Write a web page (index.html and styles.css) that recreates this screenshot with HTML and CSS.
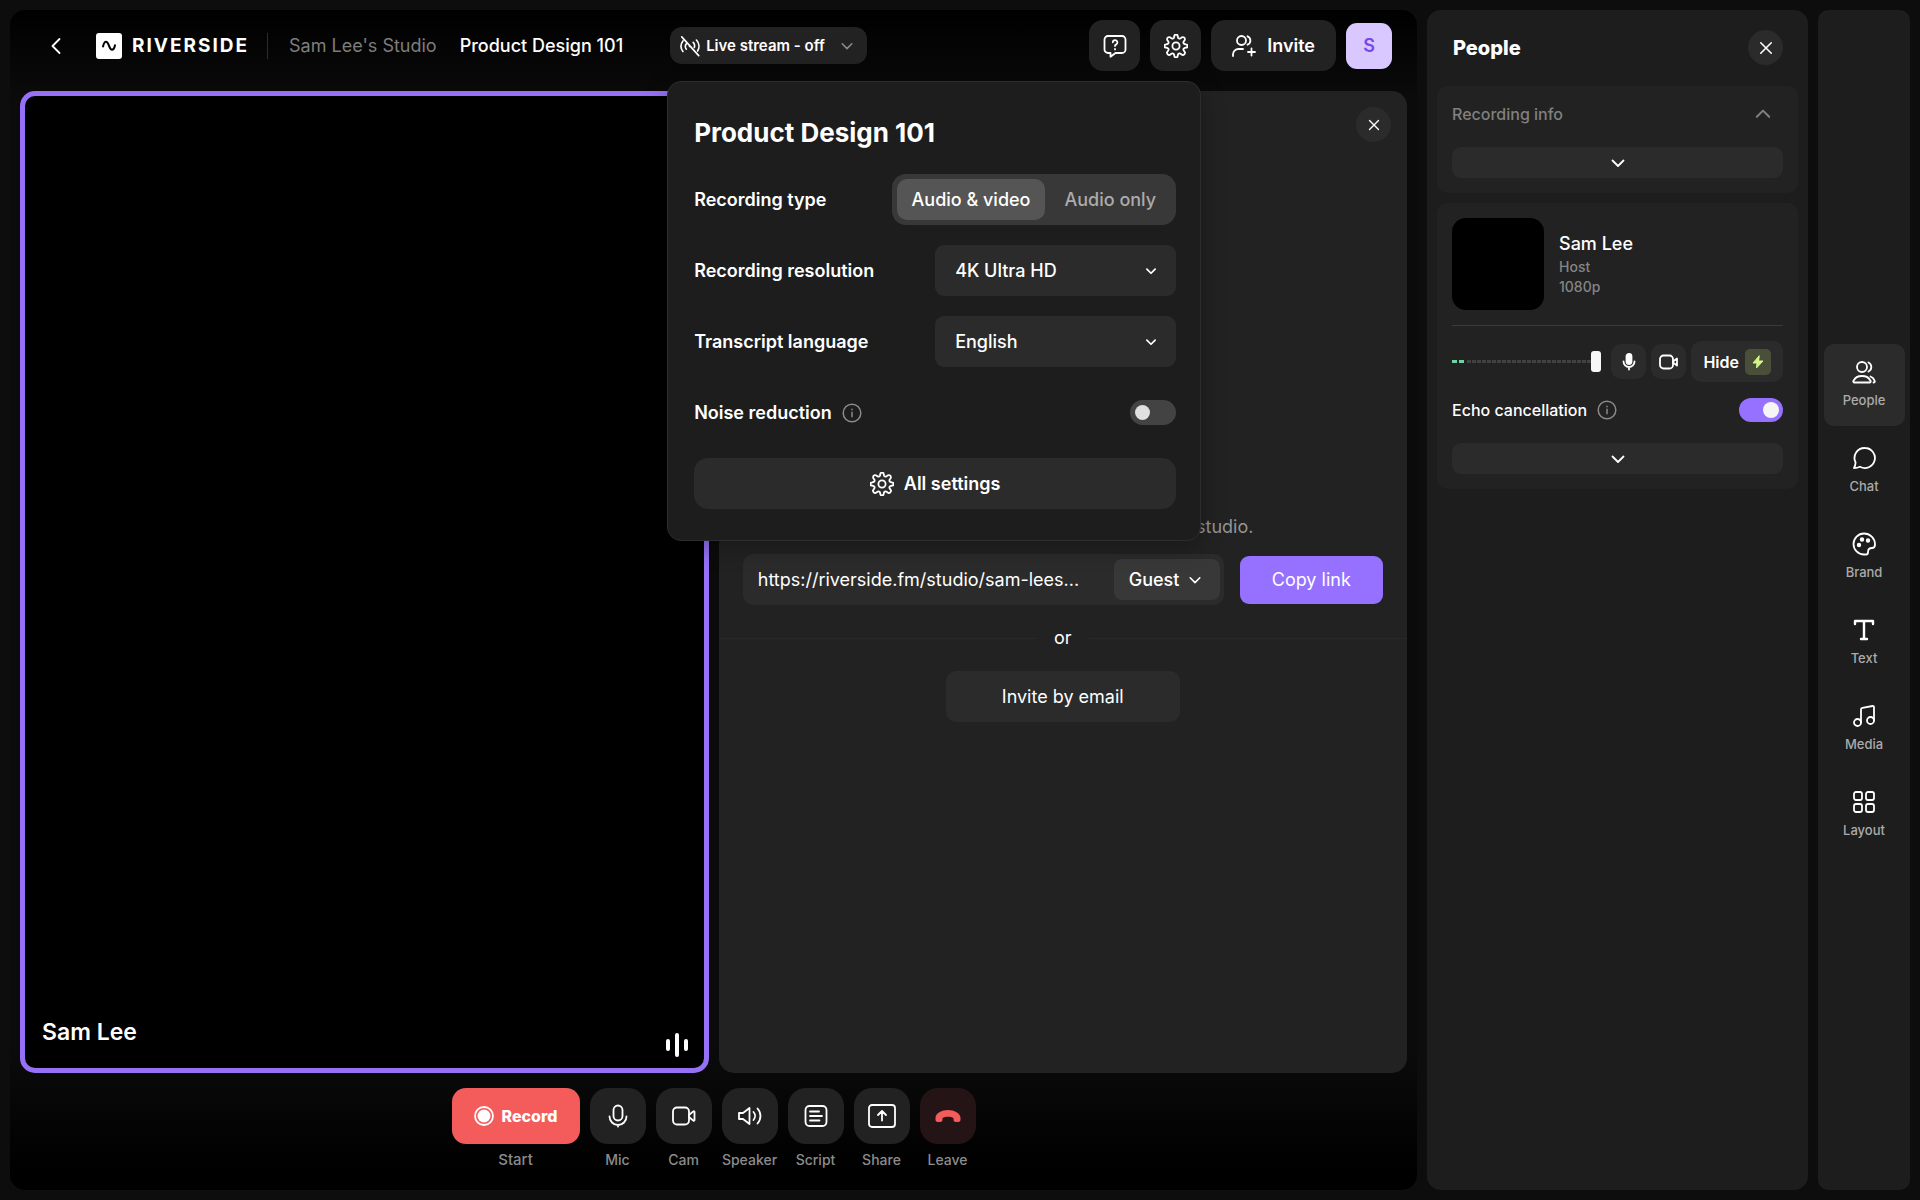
FILE: index.html
```html
<!DOCTYPE html>
<html lang="en">
<head>
  <meta charset="UTF-8">
  <meta name="viewport" content="width=device-width, initial-scale=1.0">
  <title>Product Design 101 - Riverside</title>
  <link rel="stylesheet" href="styles.css">
</head>
<body>

<svg class="sprite" aria-hidden="true">
  <symbol id="chevron" viewBox="0 0 16 16"><path d="M2.500 5.500 8 11l5.500-5.500"/></symbol>
  <symbol id="close" viewBox="0 0 16 16"><path d="M2 2l12 12M14 2 2 14"/></symbol>
  <symbol id="gear" viewBox="0 0 24 24">
    <circle cx="12" cy="12" r="3.600"/>
    <path d="M10.300 2.200a1.700 1.700 0 0 1 3.400 0l.3 1.300a1.500 1.500 0 0 0 2.200.9l1.200-.7a1.700 1.700 0 0 1 2.900 2.900l-.7 1.200a1.500 1.500 0 0 0 .9 2.200l1.300.3a1.700 1.700 0 0 1 0 3.400l-1.300.3a1.500 1.500 0 0 0-.9 2.200l.7 1.200a1.700 1.700 0 0 1-2.900 2.900l-1.200-.7a1.500 1.500 0 0 0-2.200.9l-.3 1.300a1.700 1.700 0 0 1-3.400 0l-.3-1.300a1.500 1.500 0 0 0-2.200-.9l-1.200.7a1.700 1.700 0 0 1-2.900-2.900l.7-1.200a1.500 1.500 0 0 0-.9-2.200l-1.300-.3a1.700 1.700 0 0 1 0-3.400l1.300-.3a1.500 1.500 0 0 0 .9-2.200l-.7-1.200a1.700 1.700 0 0 1 2.900-2.900l1.200.7a1.500 1.500 0 0 0 2.200-.9z"/>
  </symbol>
  <symbol id="info" viewBox="0 0 20 20"><circle cx="10" cy="10" r="8.800"/><path d="M10 9.300v4.500M10 6.200v.6"/></symbol>
  <symbol id="camera" viewBox="0 0 24 24">
    <rect x="1" y="3.500" width="16" height="17" rx="4"/>
    <path d="M17 11l4.300-3.600a.7.7 0 0 1 1.200.5v8.200a.7.7 0 0 1-1.200.5L17 13"/>
  </symbol>
</svg>

<main class="stage">
  <header class="topbar">
    <button class="back" aria-label="Back">
      <svg width="14" height="18" viewBox="0 0 14 18"><path d="M10.500 2 3.500 9l7 7"/></svg>
    </button>
    <a class="logo" href="#">
      <svg width="26" height="26" viewBox="0 0 26 26">
        <rect class="logo-box" width="26" height="26" rx="3"/>
        <path class="logo-wave" d="M7 13.500c.6-2.700 1.600-4.800 3-4.800 3.200 0 2.700 8 6 8 1.500 0 2.500-1.900 3-4.400"/>
      </svg>
      <span class="wordmark">RIVERSIDE</span>
    </a>
    <a class="studio-name" href="#">Sam Lee's Studio</a>
    <h1 class="session-name">Product Design 101</h1>

    <div class="stream">
      <button class="stream-btn">
        <svg width="22" height="22" viewBox="0 0 24 24">
          <path d="M3 2l18.500 20.500M4.300 6.500a9.500 9.500 0 0 0 0 11.500M8 9.500a5 5 0 0 0 0 6M11.500 12.300v.2M15.500 8a5.500 5.500 0 0 1 1.200 5.500M19 5.500a10 10 0 0 1 1.300 12"/>
        </svg>
        Live stream - off
        <svg class="muted" width="14" height="14"><use href="#chevron"/></svg>
      </button>

      <section class="popover">
        <h2>Product Design 101</h2>
        <div class="row">
          <span>Recording type</span>
          <div class="segmented">
            <button class="active">Audio &amp; video</button>
            <button>Audio only</button>
          </div>
        </div>
        <div class="row">
          <label for="resolution">Recording resolution</label>
          <div class="select-box">
            <select id="resolution"><option>4K Ultra HD</option><option>1080p</option></select>
            <svg width="12" height="12"><use href="#chevron"/></svg>
          </div>
        </div>
        <div class="row">
          <label for="language">Transcript language</label>
          <div class="select-box">
            <select id="language"><option>English</option></select>
            <svg width="12" height="12"><use href="#chevron"/></svg>
          </div>
        </div>
        <div class="row">
          <div class="with-info">
            <label for="noise">Noise reduction</label>
            <svg class="muted thin" width="20" height="20"><use href="#info"/></svg>
          </div>
          <input class="toggle" type="checkbox" id="noise">
        </div>
        <button class="all-settings">
          <svg width="24" height="24"><use href="#gear"/></svg>
          All settings
        </button>
      </section>
    </div>

    <div class="actions">
      <button class="square-btn" aria-label="Help">
        <svg width="24" height="24" viewBox="0 0 24 24">
          <path d="M5 2h14a3.500 3.500 0 0 1 3.500 3.500v10A3.500 3.500 0 0 1 19 19h-6.500l-5 3.800V19H5a3.500 3.500 0 0 1-3.500-3.500v-10A3.500 3.500 0 0 1 5 2z"/>
          <path d="M9.800 8.300a2.300 2.300 0 1 1 3.400 2.100c-.8.400-1.200.9-1.200 1.700M12 15v.4"/>
        </svg>
      </button>
      <button class="square-btn" aria-label="Settings">
        <svg width="24" height="24"><use href="#gear"/></svg>
      </button>
      <button class="invite-btn">
        <svg width="24" height="24" viewBox="0 0 24 24">
          <circle cx="9.500" cy="6.500" r="4.500"/>
          <path d="M1 22v-1.500a5.500 5.500 0 0 1 5.500-5.500H11M15.500 2.300a4.500 4.500 0 0 1 0 8.400M19.500 14.500v7M16 18h7"/>
        </svg>
        Invite
      </button>
      <button class="avatar">S</button>
    </div>
  </header>

  <div class="tiles">
    <section class="video-tile">
      <span class="tile-name">Sam Lee</span>
      <svg width="24" height="24" viewBox="0 0 24 24" class="level"><path d="M3 8v8M12 2v20M21 8v8"/></svg>
    </section>

    <section class="invite-tile">
      <button class="round-btn" aria-label="Close"><svg width="12" height="12"><use href="#close"/></svg></button>
      <div class="invite-body">
        <p class="hint">Share this link to invite people to your studio.</p>
        <div class="link-row">
          <div class="link-box">
            <input type="text" aria-label="Studio link" value="https://riverside.fm/studio/sam-lees..." readonly>
            <div class="role-box">
              <select aria-label="Role"><option>Guest</option></select>
              <svg width="14" height="14"><use href="#chevron"/></svg>
            </div>
          </div>
          <button class="copy-btn">Copy link</button>
        </div>
      </div>
      <div class="or">or</div>
      <button class="email-btn">Invite by email</button>
    </section>
  </div>

  <footer class="controls">
    <div class="control">
      <button id="record" class="record">
        <svg width="20" height="20" viewBox="0 0 20 20"><circle cx="10" cy="10" r="9"/><circle class="dot" cx="10" cy="10" r="6.500"/></svg>
        Record
      </button>
      <label class="start" for="record">Start</label>
    </div>
    <div class="control">
      <button id="mic"><svg width="24" height="24" viewBox="0 0 24 24"><rect x="7.500" y="1.500" width="9" height="15" rx="4.500"/><path d="M3.500 12.500a8.500 8.500 0 0 0 17 0M12 21.500v1"/></svg></button>
      <label for="mic">Mic</label>
    </div>
    <div class="control">
      <button id="cam"><svg width="24" height="24"><use href="#camera"/></svg></button>
      <label for="cam">Cam</label>
    </div>
    <div class="control">
      <button id="speaker"><svg width="24" height="24" viewBox="0 0 24 24"><path d="M1 9v6h4l6.500 5V4L5 9zM15.500 8a6 6 0 0 1 0 8M19.500 4.500a11 11 0 0 1 0 15"/></svg></button>
      <label for="speaker">Speaker</label>
    </div>
    <div class="control">
      <button id="script"><svg width="24" height="24" viewBox="0 0 24 24"><rect x="1.500" y="2" width="21" height="20" rx="4"/><path d="M6 7.500h9M6 12h12M6 16.500h9.500"/></svg></button>
      <label for="script">Script</label>
    </div>
    <div class="control">
      <button id="share"><svg width="28" height="24" viewBox="0 0 28 24"><rect x="1" y="1" width="26" height="22" rx="3"/><path d="M14 16.500v-9M10 11l4-4 4 4"/></svg></button>
      <label for="share">Share</label>
    </div>
    <div class="control">
      <button id="leave" class="leave"><svg width="26" height="14" viewBox="0 0 26 14"><path d="M.5 9C.5 4 7 1 13 1s12.500 3 12.500 8v1.500A2.500 2.500 0 0 1 23 13h-2a2.500 2.500 0 0 1-2.500-2.500V9c-3-1.600-8-1.600-11 0v1.500A2.500 2.500 0 0 1 5 13H3a2.500 2.500 0 0 1-2.500-2.500z"/></svg></button>
      <label for="leave">Leave</label>
    </div>
  </footer>
</main>

<aside class="people">
  <header class="people-head">
    <h2>People</h2>
    <button class="round-btn" aria-label="Close"><svg width="14" height="14"><use href="#close"/></svg></button>
  </header>

  <section class="card">
    <button class="card-head">
      Recording info
      <svg class="up" width="18" height="18"><use href="#chevron"/></svg>
    </button>
    <button class="expand" aria-label="Show more"><svg width="16" height="16"><use href="#chevron"/></svg></button>
  </section>

  <section class="card">
    <div class="person">
      <div class="thumb"></div>
      <div class="person-text">
        <strong>Sam Lee</strong>
        <span>Host</span>
        <span>1080p</span>
      </div>
    </div>
    <div class="person-controls">
      <input class="volume" type="range" min="0" max="100" value="100" aria-label="Volume">
      <button class="small-btn" aria-label="Mute">
        <svg width="18" height="18" viewBox="0 0 18 18"><rect class="solid" x="6.500" y="1" width="5" height="10" rx="2.500"/><path d="M3.500 8.500a5.500 5.500 0 0 0 11 0M9 14.500v2"/></svg>
      </button>
      <button class="small-btn" aria-label="Camera"><svg width="20" height="18" viewBox="0 0 20 18"><rect x="1" y="2.500" width="13" height="13" rx="3.500"/><path d="M14 8.500l4-3v7l-4-3"/></svg></button>
      <button class="hide-btn">
        Hide
        <span class="bolt"><svg width="12" height="14" viewBox="0 0 12 14"><path d="M7 1 1 8h4l-.5 5L11 6H7z"/></svg></span>
      </button>
    </div>
    <div class="echo">
      <div class="with-info">
        <label for="echo">Echo cancellation</label>
        <svg class="muted thin" width="20" height="20"><use href="#info"/></svg>
      </div>
      <input class="toggle" type="checkbox" id="echo" checked>
    </div>
    <button class="expand" aria-label="Show more"><svg width="16" height="16"><use href="#chevron"/></svg></button>
  </section>
</aside>

<nav class="rail">
  <button class="active">
    <svg width="24" height="24" viewBox="0 0 24 24"><circle cx="10" cy="7" r="5"/><path d="M2.500 22.500c-1 0-1.500-.8-1-1.700C2.800 18 6 16 10 16s7.200 2 8.500 4.800c.5.900 0 1.700-1 1.700zM16.500 2.500a5 5 0 0 1 0 9M18.500 16.500c2 .8 3.500 2.500 4.200 4.300.4.900-.2 1.700-1.200 1.700"/></svg>
    People
  </button>
  <button>
    <svg width="24" height="24" viewBox="0 0 24 24"><path d="M13 2a10 10 0 1 1-5 18.700c-2 .9-4 1.300-6 1.300 1-1.800 1.500-3.600 1.600-5.500A10 10 0 0 1 13 2z"/></svg>
    Chat
  </button>
  <button>
    <svg width="24" height="24" viewBox="0 0 24 24">
      <path d="M12 1.500a10.500 10.500 0 0 0 0 21h2c1.400 0 2-1 2-2.300 0-2.800 1.200-4.200 4-4.200 2 0 3-1.200 3-3.500C23 6.300 18 1.500 12 1.500z"/>
      <circle class="solid" cx="10" cy="7.500" r="1.300"/><circle class="solid" cx="16" cy="8.500" r="1.300"/><circle class="solid" cx="7" cy="13" r="1.300"/>
    </svg>
    Brand
  </button>
  <button>
    <svg class="bold" width="24" height="24" viewBox="0 0 24 24"><path d="M3 6V3h18v3M12 3v18M9 21h6"/></svg>
    Text
  </button>
  <button>
    <svg width="24" height="24" viewBox="0 0 24 24"><circle cx="5.500" cy="18.500" r="3.500"/><circle cx="18.500" cy="16.500" r="3.500"/><path d="M9 18.500V5.500c0-1 .5-1.500 1.500-1.700L20.500 2c1-.2 1.500.2 1.500 1v13.500"/></svg>
    Media
  </button>
  <button>
    <svg width="24" height="24" viewBox="0 0 24 24"><rect x="2" y="2" width="8" height="8" rx="2"/><rect x="14" y="2" width="8" height="8" rx="2"/><rect x="2" y="14" width="8" height="8" rx="2"/><rect x="14" y="14" width="8" height="8" rx="2"/></svg>
    Layout
  </button>
</nav>

</body>
</html>
```

FILE: styles.css
```css
* {
  box-sizing: border-box;
}

body {
  margin: 0;
  padding: 10px;
  min-height: 100vh;
  display: flex;
  gap: 10px;
  background: #0d0d0d;
  color: #fff;
  font-family: Inter, "Liberation Sans", sans-serif;
  font-size: 18px;
  line-height: 24px;
}

h1, h2, p {
  margin: 0;
}

a {
  color: inherit;
  text-decoration: none;
}

button, select, input {
  font: inherit;
  color: inherit;
  border: 0;
  margin: 0;
}

button {
  display: flex;
  align-items: center;
  justify-content: center;
  padding: 0;
  background: #222;
  cursor: pointer;
}

select {
  appearance: none;
  cursor: pointer;
}

svg {
  flex: none;
  fill: none;
  stroke: currentColor;
  stroke-width: 1.800;
  stroke-linecap: round;
  stroke-linejoin: round;
}

.sprite {
  position: absolute;
  width: 0;
  height: 0;
}

.thin {
  stroke-width: 1.500;
}

.bold {
  stroke-width: 2.400;
}

.muted {
  color: #8a8a8a;
}

.solid {
  fill: currentColor;
}

/* stage */

.stage {
  flex: 1;
  min-width: 0;
  display: flex;
  flex-direction: column;
  border-radius: 15px;
  background: linear-gradient(#000, #0b0b0b 90px, #0b0b0b 1040px, #000 1160px);
}

.topbar {
  display: flex;
  align-items: center;
  padding: 10px 25px 20px 39px;
}

.back {
  background: none;
  margin-right: 33px;
}

.logo {
  display: flex;
  align-items: center;
  gap: 10px;
  padding-right: 18px;
  border-right: 1px solid #2c2c2c;
  margin-right: 21px;
}

.logo-box {
  fill: #fff;
  stroke: none;
}

.logo-wave {
  stroke: #000;
  stroke-width: 2;
}

.wordmark {
  font-size: 19px;
  font-weight: 700;
  letter-spacing: 2px;
}

.studio-name {
  color: #7d7d7d;
  margin-right: 23px;
}

.session-name {
  font-size: 18px;
  font-weight: 500;
}

.stream {
  position: relative;
  margin-left: 47px;
}

.stream-btn {
  height: 37px;
  padding: 0 13px 0 9px;
  gap: 5px;
  border-radius: 12px;
  font-size: 15px;
  font-weight: 600;
}

.stream-btn .muted {
  margin-left: 10px;
}

.actions {
  display: flex;
  align-items: center;
  gap: 10px;
  margin-left: auto;
}

.square-btn {
  width: 51px;
  height: 51px;
  border-radius: 14px;
}

.invite-btn {
  height: 51px;
  padding: 0 21px;
  gap: 11px;
  border-radius: 14px;
  font-weight: 600;
}

.avatar {
  width: 46px;
  height: 46px;
  border-radius: 11px;
  background: #d9c8ff;
  color: #7548e8;
  font-weight: 600;
}

/* settings popover */

.popover {
  position: absolute;
  z-index: 2;
  top: 54px;
  left: -3px;
  width: 534px;
  padding: 35px 24px 31px 26px;
  display: flex;
  flex-direction: column;
  gap: 20px;
  background: #1d1d1d;
  border: 1px solid #2d2d2d;
  border-radius: 14px;
  box-shadow: 0 6px 24px rgba(0, 0, 0, 0.3);
}

.popover h2 {
  font-size: 26px;
  font-weight: 700;
  line-height: 32px;
  margin-bottom: 5px;
}

.row {
  display: flex;
  align-items: center;
  justify-content: space-between;
  height: 51px;
  font-weight: 600;
}

.segmented {
  display: flex;
  height: 51px;
  padding: 5px;
  border-radius: 14px;
  background: #383838;
}

.segmented button {
  padding: 0 15px;
  border-radius: 10px;
  background: none;
  color: #ababab;
  font-weight: 500;
}

.segmented button + button {
  padding: 0 15px 0 19px;
}

.segmented .active {
  background: #555;
  color: #fff;
}

.select-box, .role-box {
  position: relative;
  display: flex;
}

.select-box select {
  width: 241px;
  height: 51px;
  padding: 0 20px;
  border-radius: 9px;
  background: #2b2b2b;
  font-weight: 500;
}

.select-box svg, .role-box svg {
  position: absolute;
  top: 0;
  bottom: 0;
  right: 19px;
  margin: auto;
  pointer-events: none;
  stroke-width: 2.300;
}

.with-info {
  display: flex;
  align-items: center;
  gap: 10px;
}

.toggle {
  appearance: none;
  width: 46px;
  height: 25px;
  padding: 5px;
  border-radius: 13px;
  background: #434343;
  cursor: pointer;
}

.toggle::before {
  content: "";
  display: block;
  width: 15px;
  height: 15px;
  border-radius: 50%;
  background: #e0e0e0;
}

.toggle:checked {
  width: 44px;
  height: 24px;
  padding: 4px;
  background: #9671ff;
}

.toggle:checked::before {
  width: 16px;
  height: 16px;
  margin-left: auto;
  background: #f5f5f5;
}

.all-settings {
  height: 51px;
  gap: 10px;
  border-radius: 14px;
  background: #2b2b2b;
  font-weight: 600;
}

/* tiles */

.tiles {
  flex: 1;
  display: grid;
  grid-template-columns: 1fr 1fr;
  gap: 10px;
  padding: 0 10px;
}

.video-tile {
  display: flex;
  align-items: flex-end;
  justify-content: space-between;
  padding: 0 15px 11px 17px;
  border: 5px solid #9671f7;
  border-radius: 15px;
  background: #000;
}

.tile-name {
  padding-bottom: 13px;
  font-size: 23px;
  font-weight: 600;
}

.level {
  stroke-width: 4;
}

.invite-tile {
  display: flex;
  flex-direction: column;
  padding-top: 16px;
  border-radius: 15px;
  background: #222;
}

.round-btn {
  width: 35px;
  height: 35px;
  border-radius: 50%;
  background: #2b2b2b;
}

.invite-tile .round-btn {
  align-self: flex-end;
  margin-right: 16px;
}

.invite-body {
  width: 640px;
  max-width: 100%;
  margin: 373px auto 21px;
}

.hint {
  margin-bottom: 15px;
  text-align: center;
  color: #949494;
}

.link-row {
  display: flex;
  align-items: center;
  gap: 16px;
}

.link-box {
  flex: 1;
  display: flex;
  align-items: center;
  height: 51px;
  padding: 0 4px 0 15px;
  border-radius: 10px;
  background: #2b2b2b;
}

.link-box input {
  flex: 1;
  min-width: 0;
  padding: 0;
  background: none;
}

.role-box select {
  width: 106px;
  height: 41px;
  padding: 0 15px;
  border-radius: 8px;
  background: #383838;
  font-weight: 500;
}

.role-box svg {
  right: 18px;
  stroke-width: 1.800;
}

.copy-btn {
  width: 143px;
  height: 48px;
  border-radius: 9px;
  background: #9671ff;
}

.or {
  display: flex;
  align-items: center;
  gap: 17px;
}

.or::before, .or::after {
  content: "";
  flex: 1;
  height: 1px;
  background: #292929;
}

.email-btn {
  align-self: center;
  width: 234px;
  height: 51px;
  margin-top: 21px;
  border-radius: 10px;
  background: #2b2b2b;
}

/* bottom bar */

.controls {
  display: flex;
  justify-content: center;
  gap: 10px;
  padding: 15px 0 20px;
}

.control {
  width: 56px;
  display: flex;
  flex-direction: column;
  align-items: center;
  gap: 6px;
  font-size: 14px;
  font-weight: 500;
  line-height: 20px;
  color: #8c8c8c;
}

.control:first-child {
  width: 128px;
}

.control .start {
  font-size: 15px;
}

.control button {
  width: 100%;
  height: 56px;
  border-radius: 18px;
  color: #fff;
}

.control .record {
  gap: 8px;
  border-radius: 14px;
  background: #f45b5b;
  font-size: 16px;
  font-weight: 800;
}

.dot {
  fill: #fff;
  stroke: none;
}

.control .leave {
  background: #251416;
  color: #f45b5b;
}

.leave svg {
  fill: currentColor;
  stroke: none;
}

/* people panel */

.people {
  width: 381px;
  padding: 20px 10px;
  border-radius: 14px;
  background: #1d1d1d;
}

.people-head {
  display: flex;
  align-items: center;
  justify-content: space-between;
  padding: 0 15px 21px 16px;
}

.people-head h2 {
  font-size: 20px;
  font-weight: 800;
}

.card {
  padding: 15px;
  margin-bottom: 10px;
  border-radius: 10px;
  background: #222;
}

.card-head {
  width: 100%;
  justify-content: space-between;
  padding: 0 11px 0 0;
  margin: 1px 0 21px;
  background: none;
  color: #808080;
  font-size: 16px;
  font-weight: 500;
}

.up {
  transform: rotate(180deg);
}

.expand {
  width: 100%;
  height: 31px;
  border-radius: 9px;
  background: #2b2b2b;
}

.person {
  display: flex;
  align-items: center;
  gap: 15px;
  padding-bottom: 15px;
  border-bottom: 1px solid #3a3a3a;
}

.thumb {
  width: 92px;
  height: 92px;
  border-radius: 14px;
  background: #000;
}

.person-text {
  display: flex;
  flex-direction: column;
  color: #858585;
  font-size: 14px;
  font-weight: 500;
  line-height: 20px;
}

.person-text strong {
  color: #fff;
  font-size: 18px;
  font-weight: 500;
  line-height: 26px;
}

.person-controls {
  display: flex;
  align-items: center;
  gap: 5px;
  margin: 15px 0 16px;
}

.volume {
  flex: 1;
  min-width: 0;
  height: 21px;
  margin-right: 5px;
  appearance: none;
  /* lit segments sit on top of the dashed track */
  background:
    repeating-linear-gradient(90deg, #6dd5a3 0 5px, #222 5px 7px) 0 9px / 14px 3px no-repeat,
    repeating-linear-gradient(90deg, #414141 0 4px, #222 4px 5px) 0 9px / 100% 3px no-repeat;
}

.volume::-webkit-slider-thumb {
  appearance: none;
  width: 10px;
  height: 21px;
  border-radius: 3px;
  background: #f7f7f7;
}

.small-btn {
  width: 35px;
  height: 35px;
  border-radius: 10px;
  background: #2b2b2b;
}

.hide-btn {
  height: 41px;
  padding: 0 12px;
  gap: 6px;
  border-radius: 10px;
  background: #2b2b2b;
  font-size: 16px;
  font-weight: 600;
}

.bolt {
  display: flex;
  padding: 6px 7px;
  border-radius: 5px;
  background: #4a4f39;
  color: #d6f58a;
}

.bolt svg {
  fill: currentColor;
  stroke-width: 1;
}

.echo {
  display: flex;
  align-items: center;
  justify-content: space-between;
  margin-bottom: 21px;
  font-size: 16px;
  font-weight: 500;
}

/* side rail */

.rail {
  width: 92px;
  display: flex;
  flex-direction: column;
  justify-content: center;
  align-items: center;
  gap: 4px;
  border-radius: 10px;
  background: #1d1d1d;
}

.rail button {
  width: 81px;
  height: 82px;
  flex-direction: column;
  gap: 6px;
  border-radius: 10px;
  background: none;
  color: #ababab;
  font-size: 13px;
  font-weight: 500;
  line-height: 20px;
}

.rail svg {
  color: #fff;
}

.rail .active {
  background: #2b2b2b;
}
```
